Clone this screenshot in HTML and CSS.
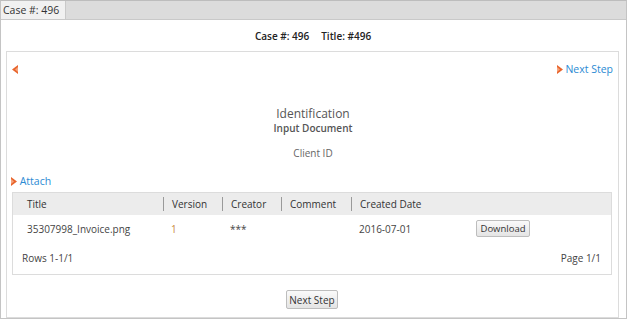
FILE: index.html
```html
<!DOCTYPE html>
<html lang="en">
<head>
  <meta charset="UTF-8">
  <title>Case #: 496</title>
  <link rel="stylesheet" href="styles.css">
</head>
<body>
  <div class="ventana">
    <div class="pestanas">
      <div class="pestana">Case #: 496</div>
    </div>

    <div class="contenido">
      <div class="cabecera">
        <span>Case #: 496</span>
        <span>Title: #496</span>
      </div>

      <div class="panel">
        <div class="navegacion">
          <span class="icono izq">
            <svg width="6" height="9" viewBox="0 0 6 9"><path d="M6 0 L0 4.5 L6 9 Z" fill="#e8652c"/><path d="M6 2 L3 4.5 L6 7 Z" fill="#f6a37c"/></svg>
          </span>
          <a href="#" class="enlace">
            <svg width="6" height="9" viewBox="0 0 6 9"><path d="M0 0 L6 4.5 L0 9 Z" fill="#e8652c"/><path d="M0 2 L3 4.5 L0 7 Z" fill="#f6a37c"/></svg>
            Next Step
          </a>
        </div>

        <div class="paso">
          <div class="paso-titulo">Identification</div>
          <div class="paso-sub">Input Document</div>
          <div class="paso-campo">Client ID</div>
        </div>

        <a href="#" class="enlace adjuntar">
          <svg width="6" height="9" viewBox="0 0 6 9"><path d="M0 0 L6 4.5 L0 9 Z" fill="#e8652c"/><path d="M0 2 L3 4.5 L0 7 Z" fill="#f6a37c"/></svg>
          Attach
        </a>

        <div class="tabla">
          <div class="fila encabezado">
            <div class="celda">Title</div>
            <div class="celda sep">Version</div>
            <div class="celda sep">Creator</div>
            <div class="celda sep">Comment</div>
            <div class="celda sep">Created Date</div>
            <div class="celda"></div>
          </div>
          <div class="fila datos">
            <div class="celda">35307998_Invoice.png</div>
            <div class="celda version">1</div>
            <div class="celda">***</div>
            <div class="celda"></div>
            <div class="celda">2016-07-01</div>
            <div class="celda"><button class="boton chico">Download</button></div>
          </div>
          <div class="pie">
            <span>Rows 1-1/1</span>
            <span>Page 1/1</span>
          </div>
        </div>

        <div class="acciones">
          <button class="boton">Next Step</button>
        </div>
      </div>
    </div>
  </div>
</body>
</html>
```

FILE: styles.css
```css
body {
  margin: 0;
  font-family: 'Open Sans', sans-serif;
  font-size: 10px;
  color: #333;
  background: white;
}
.ventana {
  width: 627px;
  height: 319px;
  box-sizing: border-box;
  border: 1px solid #c4c4c4;
  border-top-color: #bdbdbd;
}
.pestanas {
  height: 18px;
  background: #dcdcdc;
  border-bottom: 1px solid #c9c9c9;
  display: flex;
}
.pestana {
  background: #f1f1f1;
  border-right: 1px solid #c9c9c9;
  padding: 0 6px 0 2px;
  line-height: 18px;
  font-size: 10.5px;
  color: #333;
}
.contenido {
  padding: 0 7px 0 5px;
}
.cabecera {
  height: 31px;
  display: flex;
  justify-content: center;
  align-items: center;
  gap: 12px;
  font-weight: 600;
  color: #222;
  padding-left: 1px;
}
.panel {
  border: 1px solid #dcdcdc;
  padding: 9px 6px 8px 5px;
}
.navegacion {
  display: flex;
  justify-content: space-between;
  align-items: center;
  height: 16px;
}
.icono svg, .enlace svg {
  display: inline-block;
  vertical-align: -1px;
}
.enlace {
  color: #2b8ad3;
  text-decoration: none;
  font-size: 10.5px;
}
.navegacion .enlace {
  margin-right: -1px;
}
.paso {
  text-align: center;
  padding-left: 2px;
}
.paso-titulo {
  margin-top: 29px;
  font-size: 12px;
  line-height: 15px;
  color: #555;
}
.paso-sub {
  font-weight: 600;
  line-height: 14px;
  color: #555;
}
.paso-campo {
  margin-top: 11px;
  line-height: 14px;
  color: #666;
}
.adjuntar {
  display: block;
  margin-top: 13px;
  margin-left: -1px;
  line-height: 16px;
}
.tabla {
  margin-top: 3px;
  border: 1px solid #dcdcdc;
}
.fila {
  display: grid;
  grid-template-columns: 150px 59px 59px 70px 117px 1fr;
  align-items: center;
}
.encabezado {
  height: 22px;
  background: #ececec;
  color: #333;
}
.datos {
  height: 27px;
  color: #444;
}
.celda {
  padding-left: 8px;
  white-space: nowrap;
}
.celda:first-child {
  padding-left: 14px;
}
.celda.sep {
  border-left: 1px solid #9a9a9a;
  line-height: 14px;
}
.version {
  color: #c98a3c;
}
.boton {
  font-family: 'Open Sans', sans-serif;
  font-size: 10px;
  color: #333;
  background: linear-gradient(#fafafa, #e4e4e4);
  border: 1px solid #bdbdbd;
  border-radius: 2px;
  height: 19px;
  padding: 0 2px;
  cursor: pointer;
}
.boton.chico {
  font-size: 9.5px;
  height: 17px;
  width: 54px;
  padding: 0;
}
.pie {
  display: flex;
  justify-content: space-between;
  align-items: center;
  height: 32px;
  padding: 0 10px 0 9px;
  color: #444;
}
.acciones {
  margin-top: 15px;
  text-align: center;
}
```
